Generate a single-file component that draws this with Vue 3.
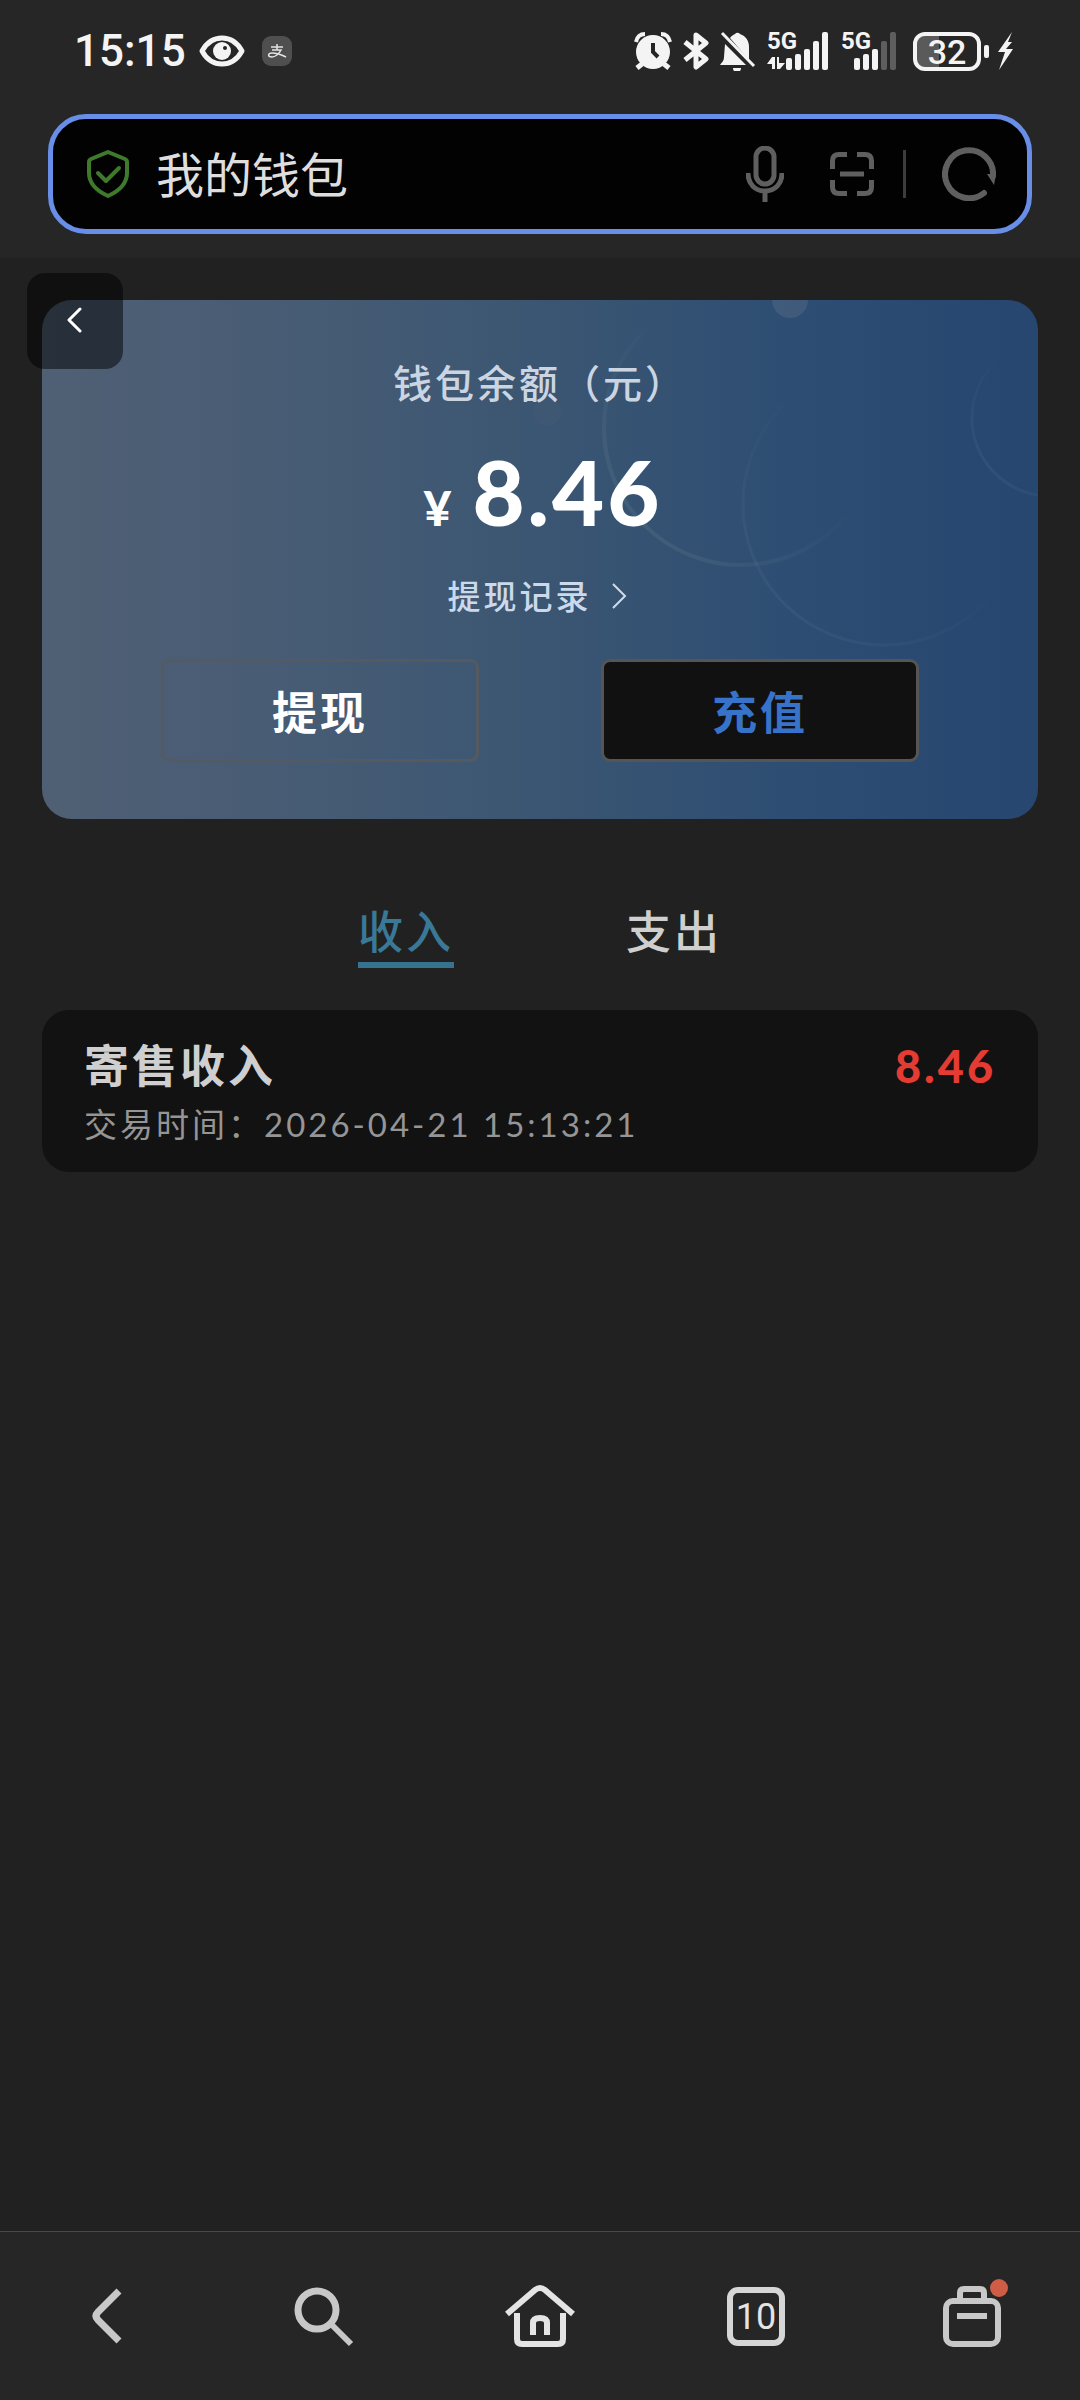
<script setup>
import { ref } from 'vue'

const address = ref('我的钱包')
const active = ref('income')
const tabs = [
  { key: 'income', label: '收入' },
  { key: 'expense', label: '支出' },
]
const records = [
  { id: 1, title: '寄售收入', time: '2026-04-21 15:13:21', amount: '8.46' },
]
const barTops = [26, 22, 17, 9, 0]
</script>

<template>
  <div class="page">
    <header class="chrome">
      <div class="status">
        <div class="status-left">
          <span class="clock">15:15</span>
          <svg class="eye" width="46" height="32" viewBox="0 0 46 32" aria-hidden="true">
            <path d="M3 16C8 7 15 3 23 3s15 4 20 13c-5 9-12 13-20 13S8 25 3 16Z" fill="none" stroke="#f4f4f4" stroke-width="5" stroke-linejoin="round" />
            <circle cx="23" cy="16" r="9" fill="#f4f4f4" />
            <circle cx="26" cy="13" r="2" fill="#262626" />
          </svg>
          <svg width="30" height="30" viewBox="0 0 30 30" aria-hidden="true">
            <rect width="30" height="30" rx="9" fill="#4f4f4f" />
            <path d="M9 11h12M15 8v6M10 14h9c-2 4-6 7-9 7-5 0-4-4 0-4 3 0 8 1 14 4" fill="none" stroke="#e4e4e4" stroke-width="1.500" />
          </svg>
        </div>
        <div class="status-right">
          <svg width="38" height="38" viewBox="0 0 38 38" aria-hidden="true">
            <circle cx="19" cy="20" r="17" fill="#f4f4f4" />
            <path d="M2 10C3 5 6 2 11 2M36 10C35 5 32 2 27 2" fill="none" stroke="#f4f4f4" stroke-width="4" />
            <path d="M8 32l-5 4M30 32l5 4" stroke="#f4f4f4" stroke-width="5" />
            <path d="M19 11v9l5 5" fill="none" stroke="#262626" stroke-width="4" />
          </svg>
          <svg width="26" height="38" viewBox="0 0 26 38" aria-hidden="true">
            <path d="M2 10l21 17-10 8V3l10 8L2 28" fill="none" stroke="#f4f4f4" stroke-width="5" stroke-linejoin="round" />
          </svg>
          <svg width="36" height="40" viewBox="0 0 36 40" aria-hidden="true">
            <path d="M15 3a3 3 0 0 1 5 0c6 2 9 7 9 13v13L10 7c1-2 3-3 5-4ZM5 13l21 21H0c2-3 4-4 4-8Z" fill="#f4f4f4" />
            <path d="M13 37h8a4 4 0 0 1-8 0Z" fill="#f4f4f4" />
            <path d="M2 2l32 33" stroke="#f4f4f4" stroke-width="3" />
          </svg>
          <svg width="63" height="50" viewBox="0 -6 63 50" role="img" aria-label="5G">
            <text class="net" x="0" y="17">5G</text>
            <path d="M0 32l5-7h3v12H5v-5ZM10 25h2v6h6l-5 6h-3Z" fill="#f4f4f4" />
            <rect v-for="(t, i) in barTops" :key="t" :x="19 + i * 9" :y="t" width="6" :height="38 - t" rx="2" fill="#f4f4f4" />
          </svg>
          <svg width="57" height="50" viewBox="0 -6 57 50" role="img" aria-label="5G">
            <text class="net" x="0" y="17">5G</text>
            <rect v-for="(t, i) in barTops" :key="t" :x="13 + i * 9" :y="t" width="6" :height="38 - t" rx="2" :fill="i < 3 ? '#f4f4f4' : '#5e5e5e'" />
          </svg>
          <div class="power">
            <span class="battery">32</span>
            <span class="nub"></span>
            <svg width="16" height="38" viewBox="0 0 16 38" aria-hidden="true">
              <path d="M15 0L1 20h7L2 38l14-21H9l6-7h-4Z" fill="#f4f4f4" />
            </svg>
          </div>
        </div>
      </div>

      <div class="search">
        <svg width="42" height="48" viewBox="0 0 42 48" aria-hidden="true">
          <path d="M21 2l17 7c2 1 2 2 2 3v11c0 11-8 18-19 23C10 41 2 34 2 23V12c0-1 0-2 2-3Z" fill="none" stroke="#3f7a2c" stroke-width="4" stroke-linejoin="round" />
          <path d="M11 23l8 8 13-13" fill="none" stroke="#3f7a2c" stroke-width="4" stroke-linecap="round" stroke-linejoin="round" />
        </svg>
        <input v-model="address" class="address" type="text" aria-label="地址栏" />
        <button class="tool" type="button" aria-label="语音">
          <svg width="38" height="56" viewBox="0 0 38 56">
            <rect x="10" y="2" width="18" height="36" rx="9" fill="none" stroke="#5f5f5f" stroke-width="5" />
            <path d="M2 27c0 11 7 18 17 18s17-7 17-18M19 45v11" fill="none" stroke="#5f5f5f" stroke-width="5" />
          </svg>
        </button>
        <button class="tool scan" type="button" aria-label="扫一扫">
          <svg width="44" height="44" viewBox="0 0 44 44">
            <path d="M2.500 17V9q0-6.500 6.500-6.500h8M27 2.500h8q6.500 0 6.500 6.500v8M41.500 28v7q0 6.500-6.500 6.500h-8M17 41.500H9q-6.500 0-6.500-6.500v-7M10 22h24" fill="none" stroke="#5f5f5f" stroke-width="5" />
          </svg>
        </button>
        <span class="divider"></span>
        <button class="tool" type="button" aria-label="刷新">
          <svg width="54" height="54" viewBox="0 0 54 54">
            <path d="M42 46A24 24 0 1 1 51 29" fill="none" stroke="#5f5f5f" stroke-width="6" stroke-linecap="round" />
            <path d="M45 27h9l-2 11Z" fill="#5f5f5f" />
          </svg>
        </button>
      </div>
    </header>

    <main class="content">
      <button class="back" type="button" aria-label="返回">
        <svg width="16" height="26" viewBox="0 0 16 26">
          <path d="M14 2L3 13l11 11" fill="none" stroke="#fff" stroke-width="3" stroke-linecap="round" stroke-linejoin="round" />
        </svg>
      </button>

      <section class="wallet">
        <svg class="decor" viewBox="0 0 996 519" preserveAspectRatio="xMaxYMin slice" aria-hidden="true">
          <defs>
            <linearGradient id="ring" x1="0" y1="1" x2="1" y2="0">
              <stop offset="0" stop-color="#7a9a9a" stop-opacity="0.220" />
              <stop offset="0.550" stop-color="#7a9a9a" stop-opacity="0" />
            </linearGradient>
            <linearGradient id="ringFaint" x1="0" y1="1" x2="1" y2="0">
              <stop offset="0" stop-color="#7a94b0" stop-opacity="0.140" />
              <stop offset="0.550" stop-color="#7a94b0" stop-opacity="0" />
            </linearGradient>
          </defs>
          <circle cx="699" cy="128" r="137" fill="none" stroke="url(#ring)" stroke-width="4" />
          <circle cx="842" cy="204" r="141" fill="none" stroke="url(#ringFaint)" stroke-width="3" />
          <circle cx="1008" cy="118" r="78" fill="none" stroke="url(#ringFaint)" stroke-width="3" />
          <circle cx="748" cy="0" r="18" fill="#4c6480" fill-opacity="0.600" />
          <circle cx="505" cy="112" r="14" fill="#4f6079" fill-opacity="0.200" />
        </svg>
        <h1 class="label">钱包余额（元）</h1>
        <p class="balance"><span class="yen">¥</span><span>8.46</span></p>
        <a class="history" href="#history">
          <span>提现记录</span>
          <svg width="15" height="26" viewBox="0 0 15 26" aria-hidden="true">
            <path d="M1 1l12 12L1 25" fill="none" stroke="#d0dcec" stroke-width="2" />
          </svg>
        </a>
        <div class="actions">
          <button class="action" type="button">提现</button>
          <button class="action solid" type="button">充值</button>
        </div>
      </section>

      <div class="tabs" role="tablist">
        <button
          v-for="tab in tabs"
          :key="tab.key"
          class="tab"
          :class="{ active: active === tab.key }"
          type="button"
          role="tab"
          :aria-selected="active === tab.key"
          @click="active = tab.key"
        >{{ tab.label }}</button>
      </div>

      <ul class="records">
        <li v-for="r in records" :key="r.id" class="record">
          <div>
            <h2 class="record-title">{{ r.title }}</h2>
            <p class="record-time">交易时间：{{ r.time }}</p>
          </div>
          <span class="record-amount">{{ r.amount }}</span>
        </li>
      </ul>
    </main>

    <nav class="bar">
      <button class="bar-item" type="button" aria-label="后退">
        <svg width="60" height="64" viewBox="0 0 60 64">
          <path d="M41 7L20 28q-4 4 0 8l21 21" fill="none" stroke="#c8c8c8" stroke-width="7" stroke-linejoin="round" />
        </svg>
      </button>
      <button class="bar-item" type="button" aria-label="搜索">
        <svg width="60" height="64" viewBox="0 0 60 64">
          <circle cx="23" cy="26" r="19" fill="none" stroke="#c8c8c8" stroke-width="7" />
          <path d="M37 40l20 20" stroke="#c8c8c8" stroke-width="6" />
        </svg>
      </button>
      <button class="bar-item" type="button" aria-label="主页">
        <svg width="72" height="64" viewBox="0 0 72 64">
          <path d="M3 30L31 6q5-4 10 0l28 24" fill="none" stroke="#e4e4e4" stroke-width="6" />
          <path d="M13 29v26q0 5 5 5h36q5 0 5-5V29" fill="none" stroke="#e4e4e4" stroke-width="6" />
          <path d="M29 51V39q0-5 7-5t7 5v12" fill="none" stroke="#e4e4e4" stroke-width="6" />
        </svg>
      </button>
      <button class="bar-item" type="button" aria-label="标签页 10">
        <span class="pages">10</span>
      </button>
      <button class="bar-item" type="button" aria-label="工具箱">
        <span class="kit">
          <svg width="58" height="64" viewBox="0 0 58 64">
            <rect x="3" y="17" width="52" height="43" rx="7" fill="none" stroke="#c8c8c8" stroke-width="6" />
            <path d="M17 17V9q0-4 4-4h16q4 0 4 4v8" fill="none" stroke="#c8c8c8" stroke-width="6" />
            <path d="M14 32h30" stroke="#c8c8c8" stroke-width="6" />
          </svg>
          <span class="dot"></span>
        </span>
      </button>
    </nav>
  </div>
</template>

<style>
body {
  margin: 0;
  background: #212121;
}
</style>

<style scoped>
.page {
  display: flex;
  flex-direction: column;
  min-height: 100vh;
  background: #212121;
  color: #cfcfcf;
  font-family: Lato, "Noto Sans CJK SC", sans-serif;
}
button {
  padding: 0;
  border: 0;
  background: none;
  color: inherit;
  font-family: inherit;
  letter-spacing: inherit;
}
svg {
  display: block;
  flex: none;
}
h1,
h2,
p,
ul {
  margin: 0;
  padding: 0;
}

.chrome {
  background: #262626;
  padding-bottom: 24px;
}
.status {
  display: flex;
  justify-content: space-between;
  align-items: center;
  height: 102px;
  padding: 0 67px 0 74px;
  font-family: Roboto, sans-serif;
  color: #f4f4f4;
}
.status-left,
.status-right,
.power {
  display: flex;
  align-items: center;
}
.clock {
  font-size: 44px;
  font-weight: 500;
}
.eye {
  margin: 0 17px 0 13px;
}
.status-right {
  gap: 11px;
}
.net {
  font-family: "Liberation Sans Narrow", Roboto, sans-serif;
  font-size: 24px;
  font-weight: 700;
  fill: #f4f4f4;
}
.power {
  gap: 3px;
  margin-left: 4px;
}
.battery {
  box-sizing: border-box;
  width: 68px;
  height: 39px;
  border: 4px solid #f4f4f4;
  border-radius: 12px;
  background: linear-gradient(90deg, #5a5a5a 36%, transparent 36%);
  font-size: 34px;
  font-weight: 500;
  line-height: 32px;
  text-align: center;
}
.nub {
  width: 5px;
  height: 13px;
  margin-right: 5px;
  border-radius: 2px;
  background: #f4f4f4;
}

.search {
  display: flex;
  align-items: center;
  box-sizing: border-box;
  height: 120px;
  margin: 12px 48px 0;
  padding: 0 31px 0 34px;
  border: 5px solid #688ee8;
  border-radius: 38px;
  background: #020202;
}
.address {
  flex: 1;
  min-width: 0;
  margin-left: 27px;
  padding: 0 0 5px;
  border: 0;
  outline: 0;
  background: none;
  color: #dedede;
  font-family: "Noto Sans CJK SC", sans-serif;
  font-size: 48px;
  line-height: 72px;
}
.scan {
  margin: 0 29px 0 46px;
}
.divider {
  width: 3px;
  height: 48px;
  margin-right: 36px;
  background: #3c3c3c;
}

.content {
  position: relative;
  flex: 1;
  padding: 42px 42px 60px;
  letter-spacing: 3px;
}
.back {
  position: absolute;
  z-index: 1;
  top: 15px;
  left: 27px;
  display: flex;
  justify-content: center;
  width: 96px;
  height: 96px;
  padding: 34px 3px 0 0;
  border-radius: 18px;
  background: rgba(0, 0, 0, 0.5);
}
.wallet {
  position: relative;
  overflow: hidden;
  padding: 55px 119px 57px;
  border-radius: 30px;
  background: linear-gradient(90deg, #506074, #465b74 28%, #3b5672 50%, #2d4d73 76%, #274670);
}
.wallet > * {
  position: relative;
}
.wallet > .decor {
  position: absolute;
  inset: 0;
  width: 100%;
  height: 100%;
}
.label {
  color: #cbd5e2;
  font-size: 39px;
  font-weight: 500;
  line-height: 56px;
  text-align: center;
}
.balance {
  display: flex;
  justify-content: center;
  align-items: baseline;
  gap: 18px;
  height: 96px;
  margin-top: 32px;
  padding-left: 6px;
  color: #fff;
  font-size: 90px;
  font-weight: 900;
  line-height: 96px;
}
.yen {
  font-size: 48px;
  line-height: 48px;
}
.history {
  display: flex;
  justify-content: center;
  align-items: center;
  gap: 20px;
  margin-top: 33px;
  padding-right: 6px;
  color: #cbd9eb;
  font-size: 33px;
  font-weight: 500;
  line-height: 48px;
  text-decoration: none;
}
.actions {
  display: flex;
  justify-content: space-between;
  margin-top: 39px;
}
.action {
  box-sizing: border-box;
  width: 318px;
  height: 103px;
  border: 3px solid #555a60;
  border-radius: 9px;
  color: #fff;
  font-size: 45px;
  font-weight: 700;
}
.action.solid {
  border-color: #555;
  background: #111;
  color: #3873ca;
}

.tabs {
  display: flex;
  justify-content: center;
  gap: 172px;
  margin-top: 83px;
}
.tab {
  border-bottom: 6px solid transparent;
  font-size: 45px;
  font-weight: 500;
  line-height: 60px;
}
.tab.active {
  border-color: #35738f;
  color: #3a7898;
}

.records {
  margin-top: 42px;
  list-style: none;
}
.record {
  display: flex;
  justify-content: space-between;
  padding: 26px 42px 24px;
  border-radius: 27px;
  background: #121212;
}
.record-title {
  font-size: 45px;
  font-weight: 700;
  line-height: 60px;
}
.record-time {
  margin-top: 4px;
  color: #959595;
  font-size: 33px;
  line-height: 48px;
}
.record-amount {
  color: #e43b33;
  font-size: 45px;
  font-weight: 900;
  line-height: 60px;
}

.bar {
  display: flex;
  height: 168px;
  border-top: 1px solid #4a4a4a;
  background: #262626;
}
.bar-item {
  display: flex;
  flex: 1;
  justify-content: center;
  align-items: center;
}
.pages {
  box-sizing: border-box;
  width: 58px;
  height: 59px;
  border: 6px solid #d6d6d6;
  border-radius: 11px;
  color: #e4e4e4;
  font-family: "Liberation Sans Narrow", Roboto, sans-serif;
  font-size: 36px;
  letter-spacing: normal;
  line-height: 49px;
}
.kit {
  position: relative;
}
.dot {
  position: absolute;
  top: -5px;
  right: -7px;
  width: 18px;
  height: 18px;
  border-radius: 50%;
  background: #cf5c44;
}
</style>
